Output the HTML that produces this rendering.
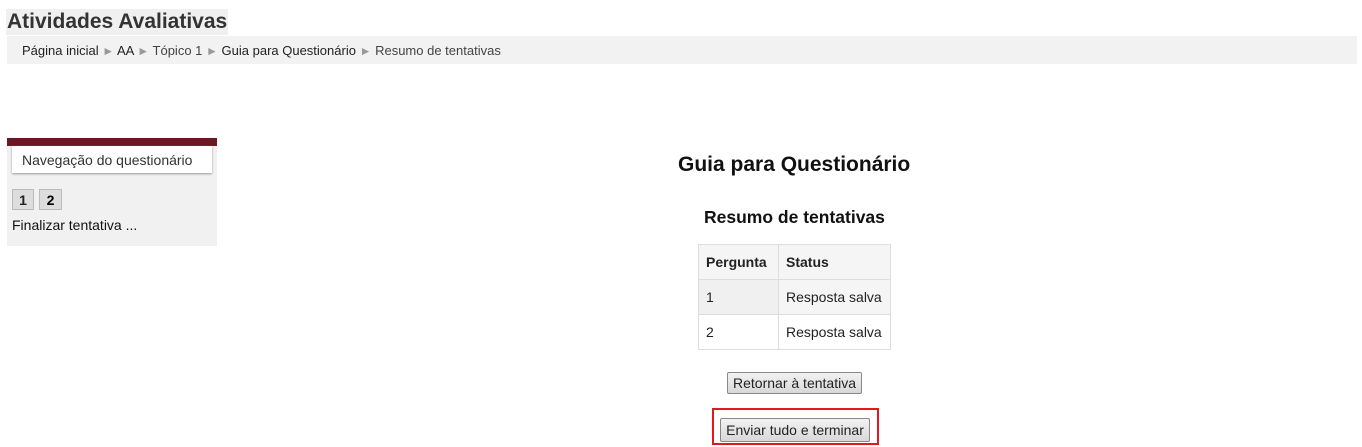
<!DOCTYPE html>
<html><head><meta charset="utf-8"><style>
body{margin:0;width:1362px;height:447px;background:#fff;font-family:"Liberation Sans",Arial,sans-serif;position:relative;overflow:hidden;color:#222}
.a{position:absolute}
.btn{position:absolute;border:1px solid #888;border-radius:2px;background:linear-gradient(#f2f2f2,#d8d8d8);font-size:14px;color:#222;text-align:center;box-sizing:border-box}
td,th{border:1px solid #ddd;font-size:14px;text-align:left;padding:0 7px;box-sizing:border-box}
.s{color:#999;font-size:12px}
</style></head><body>
<div class="a" style="left:6px;top:9px;width:222px;height:26px;background:#f0f0f0"></div>
<div class="a" style="left:7px;top:10px;font-size:21px;font-weight:bold;color:#333">Atividades Avaliativas</div>
<div class="a" style="left:7px;top:36px;width:1350px;height:28px;background:#f2f2f2"></div>
<div class="a" style="left:22px;top:43px;font-size:13px;color:#222">Página inicial <span class="s">►</span> AA <span class="s">►</span> <span style="color:#444">Tópico 1</span> <span class="s">►</span> Guia para Questionário <span class="s">►</span> <span style="color:#444">Resumo de tentativas</span></div>

<div class="a" style="left:7px;top:138px;width:210px;height:108px;background:#f1f1f1"></div>
<div class="a" style="left:7px;top:138px;width:210px;height:8px;background:#6b1724"></div>
<div class="a" style="left:12px;top:146px;width:200px;height:27px;background:#fff;box-shadow:0 1px 2px #999"></div>
<div class="a" style="left:22px;top:152px;font-size:14px;color:#333">Navegação do questionário</div>
<div class="a" style="left:12px;top:189px;width:22px;height:21px;background:#ddd;border:1px solid #bbb;box-sizing:border-box;font-size:14px;font-weight:bold;text-align:center;line-height:20px">1</div>
<div class="a" style="left:39px;top:189px;width:23px;height:21px;background:#ddd;border:1px solid #bbb;box-sizing:border-box;font-size:14px;font-weight:bold;text-align:center;line-height:20px;color:#000">2</div>
<div class="a" style="left:12px;top:217px;font-size:14px;color:#111">Finalizar tentativa ...</div>

<div class="a" style="left:678px;top:153px;font-size:21px;font-weight:bold;color:#111">Guia para Questionário</div>
<div class="a" style="left:704px;top:207px;font-size:17.5px;font-weight:bold;color:#111">Resumo de tentativas</div>
<table class="a" style="left:698px;top:244px;border-collapse:collapse;width:193px">
<tr style="height:35px;background:#f5f5f5"><th style="width:80px">Pergunta</th><th>Status</th></tr>
<tr style="height:35px;background:#f0f0f0"><td>1</td><td style="background:#f5f5f5">Resposta salva</td></tr>
<tr style="height:35px"><td>2</td><td>Resposta salva</td></tr>
</table>
<div class="btn" style="left:727px;top:372px;width:135px;height:22px;line-height:20px">Retornar à tentativa</div>
<div class="a" style="left:712px;top:408px;width:167px;height:37px;border:2px solid #e8141e;box-sizing:border-box"></div>
<div class="btn" style="left:720px;top:418px;width:150px;height:24px;line-height:22px">Enviar tudo e terminar</div>
</body></html>
